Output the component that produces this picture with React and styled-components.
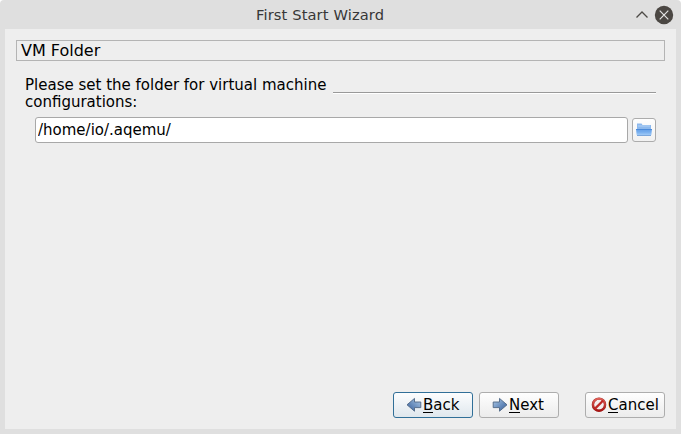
import React from "react";
import styled, { createGlobalStyle } from "styled-components";

const GlobalStyle = createGlobalStyle`
  * { box-sizing: border-box; }
  body { margin: 0; background: #fff; font-family: "DejaVu Sans", sans-serif; font-size: 15px; color: #000; }
`;

const Window = styled.div`
  width: 681px;
  height: 434px;
  display: flex;
  flex-direction: column;
  padding: 0 5px 5px;
  background: #dfdfdf;
  border-radius: 4px 4px 0 0;
  overflow: hidden;
`;

const TitleBar = styled.header`
  height: 29px;
  flex: none;
  display: grid;
  grid-template-columns: 1fr auto;
  align-items: center;
  padding-right: 2px;
`;

const Title = styled.h1`
  margin: 0;
  padding-left: 251px;
  font-size: 14.67px;
  font-weight: 400;
  letter-spacing: 0.12px;
  line-height: 29px;
  color: #373737;
  white-space: nowrap;
`;

const WindowControls = styled.div`
  display: flex;
  gap: 2px;
  padding-top: 1px;
`;

const ControlIcon = styled.svg`
  display: block;
  width: 20px;
  height: 20px;
`;

const Page = styled.main`
  flex: 1;
  display: flex;
  flex-direction: column;
  padding: 11px;
  background: #eee;
`;

const PageHeading = styled.h2`
  margin: 0;
  height: 21px;
  border: 1px solid #b4b4b4;
  padding-left: 4px;
  font-size: 16px;
  font-weight: 400;
  line-height: 19px;
`;

const Prompt = styled.div`
  display: flex;
  height: 34px;
  margin: 15px 9px 0;
  line-height: 17px;
`;

const PromptText = styled.label`
  width: 308px;
  flex: none;
  padding-top: 1px;
`;

const Rule = styled.div`
  flex: 1;
  height: 2px;
  margin-top: 16px;
  background: #999;
  border-bottom: 1px solid #fff;
`;

const FieldRow = styled.div`
  display: flex;
  align-items: center;
  gap: 4px;
  margin: 7px 9px 0 19px;
`;

const PathInput = styled.input`
  flex: 1;
  min-width: 0;
  height: 26px;
  border: 1px solid #a8a8a8;
  border-radius: 3px;
  padding: 0 2px;
  background: #fff;
  font: inherit;
  color: #000;
  outline: none;
`;

const BrowseButton = styled.button`
  width: 24px;
  height: 24px;
  display: flex;
  align-items: center;
  justify-content: center;
  padding: 0 0 2px;
  border: 1px solid #acacac;
  border-radius: 3px;
  background: linear-gradient(#fefefe, #f1f1f1);
`;

const Footer = styled.footer`
  display: flex;
  justify-content: flex-end;
  gap: 6px;
  margin-top: auto;
`;

const WizardButton = styled.button`
  width: 80px;
  height: 26px;
  display: flex;
  align-items: center;
  justify-content: flex-start;
  gap: 1px;
  margin-left: ${(p) => (p.$separated ? "20px" : "0")};
  padding: 0 0 1px ${(p) => p.$inset}px;
  border: 1px solid ${(p) => (p.$primary ? "#306f98" : "#adadad")};
  border-radius: 3px;
  background: ${(p) => (p.$primary ? "linear-gradient(#fcfdfe, #dfe7ed)" : "linear-gradient(#fefefe, #ececec)")};
  font: inherit;
  line-height: 18px;
  color: #000;
`;

const ButtonIcon = styled.svg`
  display: block;
  flex: none;
  width: 16px;
  height: 16px;
  margin-top: 1px;
`;

const Mnemonic = styled.span`
  display: inline-block;
  height: 17px;
  border-bottom: 1px solid #000;
`;

function ArrowIcon({ flip }) {
  const id = flip ? "arrow-left" : "arrow-right";
  return (
    <ButtonIcon viewBox="0 0 16 16">
      <defs>
        <linearGradient id={id} x1="0" y1="0" x2="1" y2="1">
          <stop offset="0" stopColor="#b3cdea" />
          <stop offset=".48" stopColor="#7195c2" />
          <stop offset="1" stopColor="#345b98" />
        </linearGradient>
      </defs>
      <path
        transform={flip ? "translate(16 0) scale(-1 1)" : undefined}
        d="M1.2 5H7.5V1.4L15 7.8L7.5 14.2V10.6H1.2Z"
        fill={`url(#${id})`}
        stroke="#4e6785"
        strokeWidth=".9"
        strokeLinejoin="round"
      />
    </ButtonIcon>
  );
}

function CancelIcon() {
  return (
    <ButtonIcon viewBox="0 0 16 16">
      <defs>
        <linearGradient id="ban" x1="0" y1="0" x2="0" y2="1">
          <stop offset="0" stopColor="#e06058" />
          <stop offset="1" stopColor="#a81513" />
        </linearGradient>
      </defs>
      <circle cx="8" cy="7.7" r="6.1" fill="#f4eeee" stroke="#9c3230" strokeWidth="2.4" />
      <circle cx="8" cy="7.7" r="6" fill="none" stroke="url(#ban)" strokeWidth="2" />
      <path d="M3.8 11.9L12.2 3.5" stroke="#be2a27" strokeWidth="2.3" />
    </ButtonIcon>
  );
}

function FolderIcon() {
  return (
    <ButtonIcon viewBox="0 0 16 16">
      <defs>
        <linearGradient id="folder" x1="0" y1="0" x2="0" y2="1">
          <stop offset="0" stopColor="#629de6" />
          <stop offset=".5" stopColor="#76aeee" />
          <stop offset="1" stopColor="#a0caf7" />
        </linearGradient>
      </defs>
      <path d="M1 8V1.5H5.5L6.5 3H15V8Z" fill="#8db9ed" />
      <path d="M2 4H14" stroke="#b2d2f6" />
      <path d="M0 7H16L15.3 13H.7Z" fill="url(#folder)" />
      <path d="M0 7.5H16" stroke="#4a8ada" />
      <path d="M1 13.5H15" stroke="#7ba7dc" />
    </ButtonIcon>
  );
}

export default function App() {
  return (
    <>
      <GlobalStyle />
      <Window>
        <TitleBar>
          <Title>First Start Wizard</Title>
          <WindowControls>
            <ControlIcon viewBox="0 0 20 20">
              <path d="M4.5 12.5L10 7L15.5 12.5" fill="none" stroke="#4d4a46" strokeWidth="1.3" />
            </ControlIcon>
            <ControlIcon viewBox="0 0 20 20">
              <circle cx="10" cy="10" r="9.2" fill="#4b4743" />
              <path d="M5.7 5.7L14.3 14.3M14.3 5.7L5.7 14.3" stroke="#e4e4e4" strokeWidth="1.2" />
            </ControlIcon>
          </WindowControls>
        </TitleBar>
        <Page>
          <PageHeading>VM Folder</PageHeading>
          <Prompt>
            <PromptText htmlFor="folder-path">Please set the folder for virtual machine configurations:</PromptText>
            <Rule />
          </Prompt>
          <FieldRow>
            <PathInput id="folder-path" defaultValue="/home/io/.aqemu/" spellCheck={false} />
            <BrowseButton aria-label="Browse">
              <FolderIcon />
            </BrowseButton>
          </FieldRow>
          <Footer>
            <WizardButton $primary $inset={12}>
              <ArrowIcon flip />
              <span><Mnemonic>B</Mnemonic>ack</span>
            </WizardButton>
            <WizardButton $inset={12}>
              <ArrowIcon />
              <span><Mnemonic>N</Mnemonic>ext</span>
            </WizardButton>
            <WizardButton $separated $inset={5}>
              <CancelIcon />
              <span><Mnemonic>C</Mnemonic>ancel</span>
            </WizardButton>
          </Footer>
        </Page>
      </Window>
    </>
  );
}
